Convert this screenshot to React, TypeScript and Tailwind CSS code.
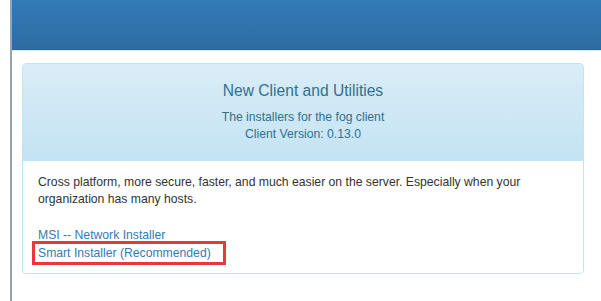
export default function App() {
  return (
    <div className="w-[601px] h-[301px] bg-white overflow-hidden pl-[10px]" style={{ fontFamily: '"Liberation Sans", Arial, sans-serif' }}>
      <div className="h-full border-l-2 border-[#9aa3ad] flex flex-col">
        <div className="h-[50px] bg-gradient-to-b from-[#337ab7] to-[#2d6ca2] border-b border-[#2a6496]" />
        <div className="h-px bg-[#e6e6e6]" />
        <div className="pl-[10px] pr-[17px] pt-[12px]">
          <div className="rounded-[4px] border border-[#bce8f1] overflow-hidden">
            <div className="h-[97px] bg-gradient-to-b from-[#d9edf7] to-[#c4e3f3] border-b border-[#bce8f1] flex flex-col items-center text-[#31708f]">
              <div className="mt-[17px] text-[15.6px] leading-[20px]">New Client and Utilities</div>
              <div className="mt-[8px] text-[12.2px] leading-[17px] text-center">
                <div>The installers for the fog client</div>
                <div>Client Version: 0.13.0</div>
              </div>
            </div>
            <div className="bg-white px-[15px] pt-[13px] pb-[11px] text-[12.2px] leading-[17px]">
              <p className="text-[#333333]">
                Cross platform, more secure, faster, and much easier on the server. Especially when your organization has many hosts.
              </p>
              <div className="mt-[18px] flex flex-col items-start text-[#337ab7]">
                <a className="leading-[18px]">MSI -- Network Installer</a>
                <div className="relative">
                  <a className="leading-[18px]">Smart Installer (Recommended)</a>
                  <span className="absolute -left-[6px] -right-[15px] -top-[3px] -bottom-[3px] border-[3px] border-[#e8383b]" />
                </div>
              </div>
            </div>
          </div>
        </div>
      </div>
    </div>
  );
}
